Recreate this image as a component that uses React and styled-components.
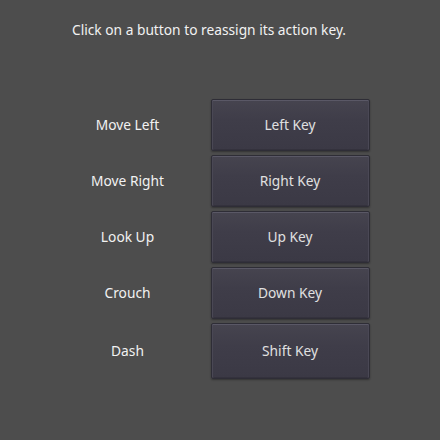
import React from 'react'
import styled, { createGlobalStyle } from 'styled-components'

const GlobalStyle = createGlobalStyle`
  html, body {
    margin: 0;
    padding: 0;
    background: #4d4d4d;
  }
  body {
    font-family: "Noto Sans", "DejaVu Sans", sans-serif;
  }
`

const Screen = styled.div`
  width: 440px;
  height: 440px;
  background: #4d4d4d;
  display: flex;
  flex-direction: column;
  align-items: center;
  box-sizing: border-box;
  padding: 20px 22px 0 0;
`

const Title = styled.div`
  color: #f2f2f2;
  font-size: 13.75px;
  line-height: 20px;
`

const Grid = styled.div`
  margin-top: 59px;
  display: grid;
  grid-template-columns: 158px 159px;
  column-gap: 4px;
  row-gap: 4px;
`

const ActionLabel = styled.div`
  color: #f2f2f2;
  font-size: 13.75px;
  display: flex;
  align-items: center;
  justify-content: center;
  padding-bottom: 2px;
`

const KeyButton = styled.button`
  height: ${p => p.$tall ? 56 : 52}px;
  box-sizing: border-box;
  margin: 0;
  padding: 0 0 2px;
  font-family: inherit;
  font-size: 13.75px;
  color: #e0e0e0;
  border: 1px solid #2e2d36;
  border-radius: 2px;
  background: linear-gradient(to bottom, #46444f 0%, #3f3d49 40%, #3b3945 100%);
  box-shadow: inset 0 1px 0 #5a5866, inset 1px 0 0 #4a4855, inset -1px 0 0 #4a4855,
    inset 0 -1px 0 #34323d, 0 1px 2px rgba(0, 0, 0, 0.35);
  cursor: pointer;
`

const bindings = [
  ['Move Left', 'Left Key'],
  ['Move Right', 'Right Key'],
  ['Look Up', 'Up Key'],
  ['Crouch', 'Down Key'],
  ['Dash', 'Shift Key'],
]

export default function App() {
  return (
    <>
      <GlobalStyle />
      <Screen>
        <Title>Click on a button to reassign its action key.</Title>
        <Grid>
          {bindings.map(([action, key], i) => (
            <React.Fragment key={action}>
              <ActionLabel>{action}</ActionLabel>
              <KeyButton $tall={i === bindings.length - 1}>{key}</KeyButton>
            </React.Fragment>
          ))}
        </Grid>
      </Screen>
    </>
  )
}
